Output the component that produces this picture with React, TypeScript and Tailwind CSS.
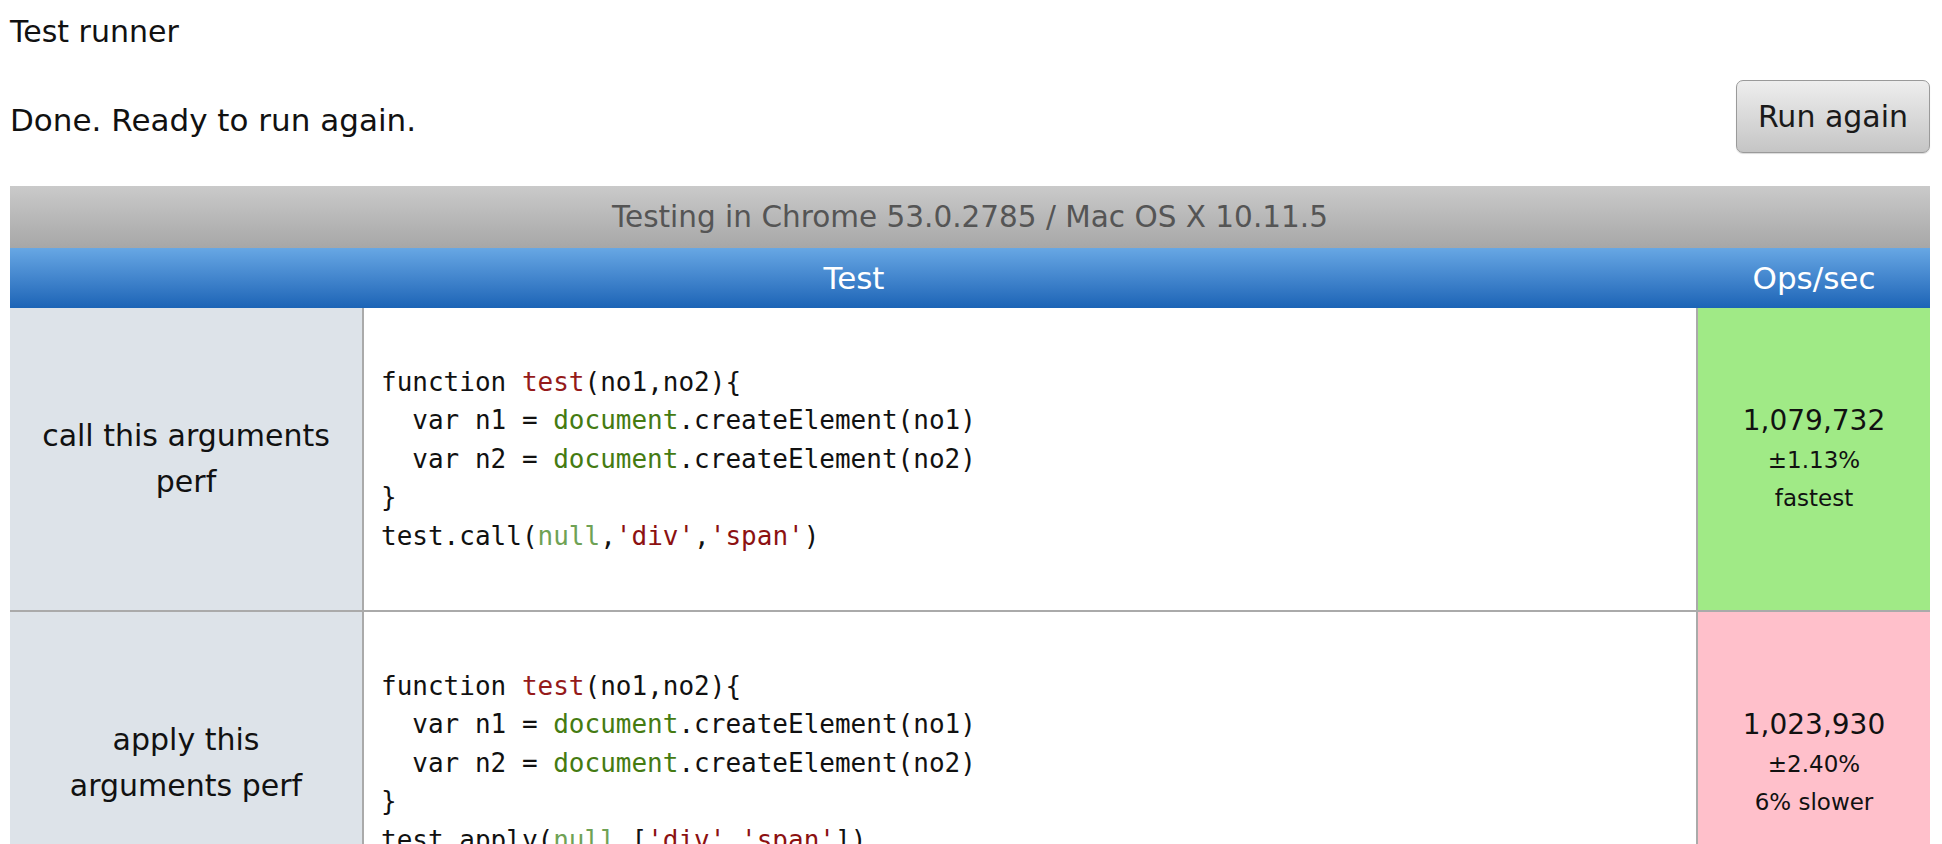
const ROWS = [
  {
    title: "call this arguments perf",
    code: "call",
    ops: "1,079,732",
    err: "±1.13%",
    note: "fastest",
    bg: "bg-[#a0ea86]",
  },
  {
    title: "apply this arguments perf",
    code: "apply",
    ops: "1,023,930",
    err: "±2.40%",
    note: "6% slower",
    bg: "bg-[#ffc0cb]",
  },
];

function Code({ kind }: { kind: string }) {
  const fn = "text-[#951a1a]";
  const str = "text-[#8c1111]";
  const doc = "text-[#457b12]";
  const nul = "text-[#6fa255]";
  return (
    <pre className="font-['DejaVu_Sans_Mono',monospace] text-[26px] leading-[38.4px] text-[#111] whitespace-pre">
      {"function "}
      <span className={fn}>test</span>
      {"(no1,no2){\n  var n1 = "}
      <span className={doc}>document</span>
      {".createElement(no1)\n  var n2 = "}
      <span className={doc}>document</span>
      {".createElement(no2)\n}\n"}
      {kind === "call" ? (
        <>
          {"test.call("}
          <span className={nul}>null</span>
          {","}
          <span className={str}>'div'</span>
          {","}
          <span className={str}>'span'</span>
          {")"}
        </>
      ) : (
        <>
          {"test.apply("}
          <span className={nul}>null</span>
          {",["}
          <span className={str}>'div'</span>
          {","}
          <span className={str}>'span'</span>
          {"])"}
        </>
      )}
    </pre>
  );
}

export default function App() {
  return (
    <div className="min-h-screen bg-white pl-[10px] pr-[12px] font-['DejaVu_Sans',sans-serif] text-[30px] text-[#111]">
      <div className="pt-[9px] leading-[45px]">Test runner</div>

      <div className="mt-[26px] flex items-start justify-between">
        <div className="mt-[18px] text-[31px] leading-[45px]">Done. Ready to run again.</div>
        <button className="flex h-[73px] w-[194px] items-center justify-center rounded-[7px] border border-[#9a9a9a] bg-linear-to-b from-[#eeeeee] to-[#c5c5c5] text-[30px] text-[#1a1a1a] shadow-[0_1px_1px_rgba(0,0,0,0.15)]">
          Run again
        </button>
      </div>

      <div className="mt-[33px]">
        <div className="flex h-[62px] items-center justify-center bg-linear-to-b from-[#cacaca] to-[#a7a7a7] text-[29.5px] text-[#555]">
          Testing in Chrome 53.0.2785 / Mac OS X 10.11.5
        </div>
        <div className="flex h-[60px] bg-linear-to-b from-[#67a7e4] to-[#1b64b6] text-[31px] text-white">
          <div className="flex flex-1 items-center justify-center">Test</div>
          <div className="flex w-[232px] items-center justify-center">Ops/sec</div>
        </div>

        {ROWS.map((r) => (
          <div key={r.code} className="flex h-[304px] border-b-2 border-[#aaaaaa]">
            <div className="flex w-[354px] items-center justify-center border-r-2 border-[#aaaaaa] bg-[#dde3e9] px-[24px] text-center leading-[46px] text-[#111]">
              {r.title}
            </div>
            <div className="flex flex-1 items-center border-r-2 border-[#aaaaaa] bg-white pl-[17px]">
              <Code kind={r.code} />
            </div>
            <div className={`flex w-[232px] flex-col items-center justify-center ${r.bg} text-[#111]`}>
              <div className="text-[28px] leading-[40px]">{r.ops}</div>
              <div className="text-[23px] leading-[38px]">{r.err}</div>
              <div className="text-[23px] leading-[38px]">{r.note}</div>
            </div>
          </div>
        ))}
      </div>
    </div>
  );
}
